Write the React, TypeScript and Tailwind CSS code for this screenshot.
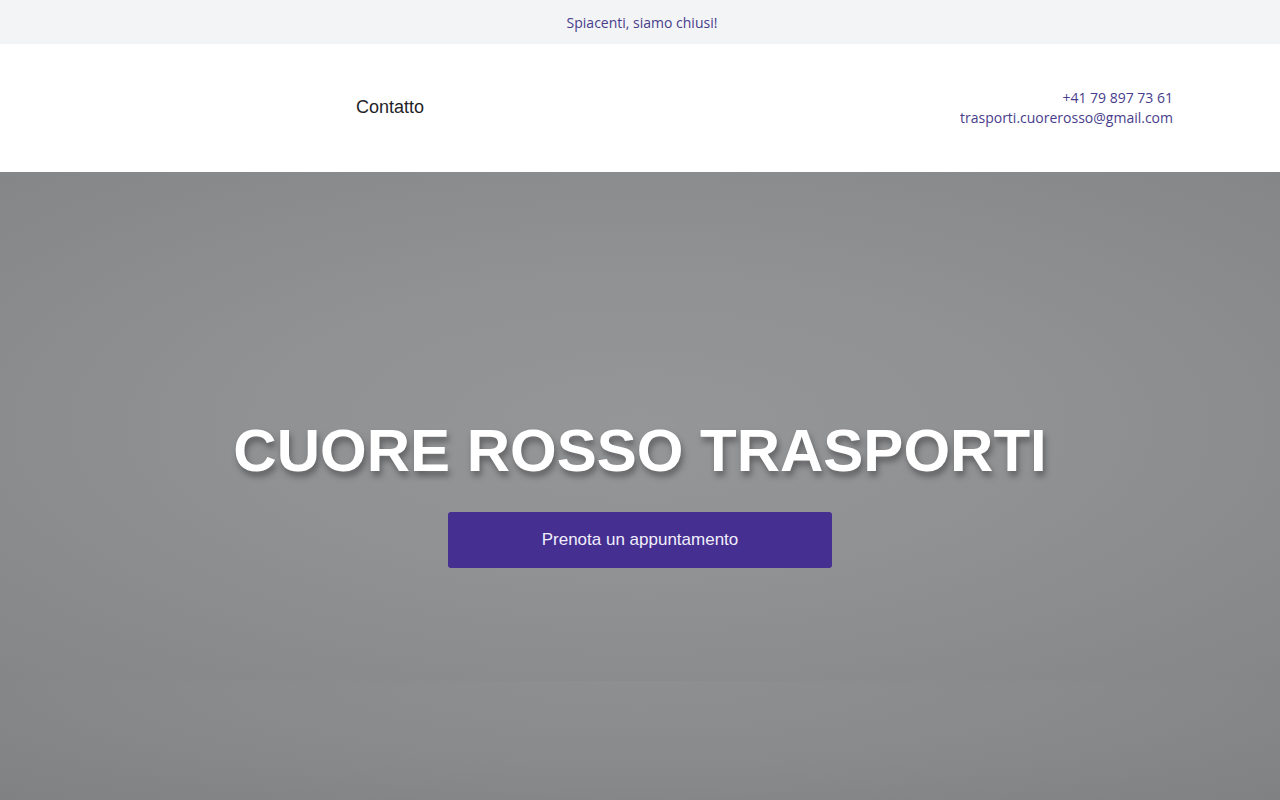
export default function App() {
  return (
    <div className="min-h-screen bg-white">
      {/* Notice bar */}
      <div className="flex h-[44px] items-center justify-center bg-[#f3f4f6] pl-[4px]">
        <p className="text-[14px] text-[#483d8b] [font-family:'Open_Sans',sans-serif]">
          Spiacenti, siamo chiusi!
        </p>
      </div>

      {/* Header */}
      <header className="flex h-[128px] items-center justify-between bg-white pl-[356px] pr-[107px]">
        <a className="-mt-[2px] text-[18px] text-[#1f2328] [font-family:'Liberation_Sans',Arial,sans-serif]">
          Contatto
        </a>
        <div className="flex flex-col items-end text-[14px] leading-[20px] text-[#483d8b] [font-family:'Open_Sans',sans-serif]">
          <span>+41 79 897 73 61</span>
          <span>trasporti.cuorerosso@gmail.com</span>
        </div>
      </header>

      {/* Hero */}
      <section className="flex flex-col">
        <div className="flex h-[509px] flex-col items-center pt-[249px] bg-[radial-gradient(ellipse_at_center,#959698_0%,#909193_45%,#858688_100%)]">
          <h1 className="text-[60px] font-bold leading-[60px] text-white [font-family:'Liberation_Sans',Arial,sans-serif] [text-shadow:2px_5px_6px_rgba(0,0,0,0.35)]">
            CUORE ROSSO TRASPORTI
          </h1>
          <button className="mt-[31px] flex h-[56px] w-[384px] items-center justify-center rounded-[3px] bg-[#452f91] text-[17px] text-[#f1eefb] [font-family:'Liberation_Sans',Arial,sans-serif]">
            Prenota un appuntamento
          </button>
        </div>
        <div className="h-[119px] bg-[radial-gradient(ellipse_at_top,#8e8f91_0%,#898a8c_50%,#808183_100%)]" />
      </section>
    </div>
  );
}
